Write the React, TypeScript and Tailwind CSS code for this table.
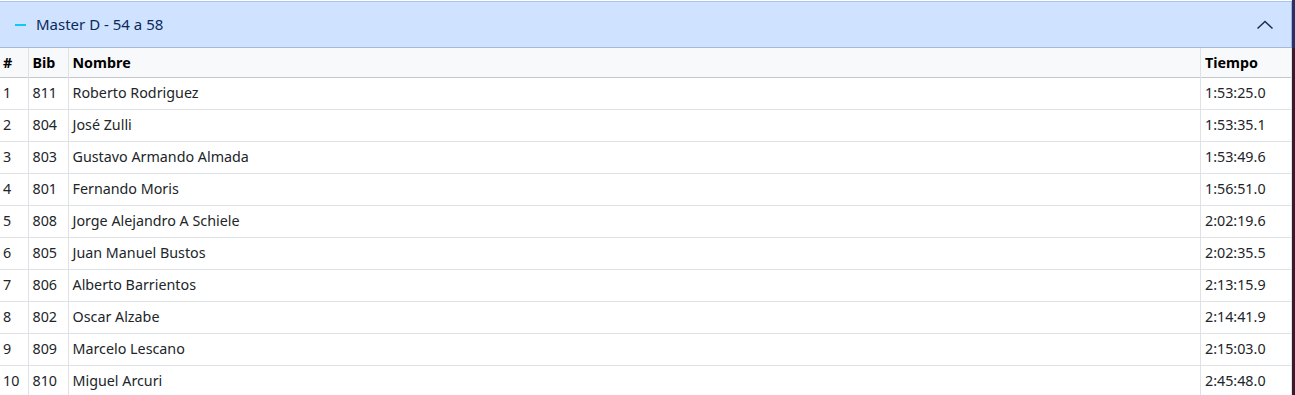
import React from "react";

const rows = [
  ["1", "811", "Roberto Rodriguez", "1:53:25.0"],
  ["2", "804", "José Zulli", "1:53:35.1"],
  ["3", "803", "Gustavo Armando Almada", "1:53:49.6"],
  ["4", "801", "Fernando Moris", "1:56:51.0"],
  ["5", "808", "Jorge Alejandro A Schiele", "2:02:19.6"],
  ["6", "805", "Juan Manuel Bustos", "2:02:35.5"],
  ["7", "806", "Alberto Barrientos", "2:13:15.9"],
  ["8", "802", "Oscar Alzabe", "2:14:41.9"],
  ["9", "809", "Marcelo Lescano", "2:15:03.0"],
  ["10", "810", "Miguel Arcuri", "2:45:48.0"],
];

export default function App() {
  return (
    <div
      className="flex w-[1295px] h-[395px] overflow-hidden bg-white"
      style={{ fontFamily: '"Noto Sans", "Open Sans", sans-serif' }}
    >
      <div className="w-[1292px] flex flex-col">
        <div className="h-[47px] shrink-0 mt-[1px] bg-[#cfe2ff] border-t border-t-[#a9c3ea] border-b border-b-[#a3b9d9] border-r border-r-[#9fb6dc] flex items-center pl-[15px] pr-[17px]">
          <span className="w-[11px] h-[2px] bg-[#0dcaf0] mr-[10px]" />
          <span className="text-[15px] text-[#0a2a5c] leading-none">Master D - 54 a 58</span>
          <svg className="ml-auto" width="18" height="12" viewBox="0 0 18 12" fill="none">
            <path d="M1.5 9.5L9 2.5L16.5 9.5" stroke="#1c2e4f" strokeWidth="1.5" />
          </svg>
        </div>
        <table className="w-[1292px] border-collapse text-[14.3px] text-[#212529] table-fixed">
          <colgroup>
            <col className="w-[28px]" />
            <col className="w-[40px]" />
            <col />
            <col className="w-[91px]" />
          </colgroup>
          <thead>
            <tr className="h-[29px] bg-[#f8f9fa] border-b border-b-[#c4c8cc]">
              <th className="text-left font-bold px-[3px] text-black border-r border-r-[#dee2e6]">#</th>
              <th className="text-left font-bold px-[4px] text-black border-r border-r-[#dee2e6]">Bib</th>
              <th className="text-left font-bold px-[4px] text-black border-r border-r-[#dee2e6]">Nombre</th>
              <th className="text-left font-bold px-[4px] text-black border-r border-r-[#dee2e6]">Tiempo</th>
            </tr>
          </thead>
          <tbody>
            {rows.map((r) => (
              <tr key={r[0]} className="h-[32px] border-b border-b-[#dee2e6]">
                <td className="px-[3px] border-r border-r-[#dee2e6]">{r[0]}</td>
                <td className="px-[4px] border-r border-r-[#dee2e6]">{r[1]}</td>
                <td className="px-[4px] border-r border-r-[#dee2e6]">{r[2]}</td>
                <td className="px-[4px] border-r border-r-[#dee2e6]">{r[3]}</td>
              </tr>
            ))}
          </tbody>
        </table>
      </div>
      <div className="w-[3px] flex flex-col">
        <div className="h-[48px] bg-[#2c2f63]" />
        <div className="flex-1 bg-[#3b1a2e]" />
      </div>
    </div>
  );
}
